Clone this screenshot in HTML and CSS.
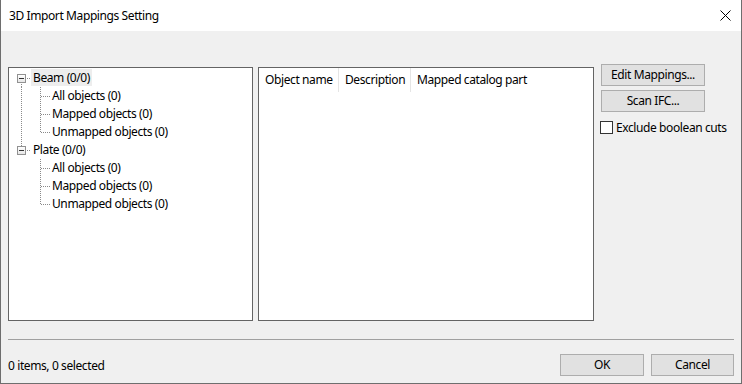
FILE: index.html
```html
<!DOCTYPE html>
<html>
	<head>
		<meta charset="UTF-8">
		<title>3D Import Mappings Setting</title>
		<link rel="stylesheet" href="styles.css">
	</head>
	<body>
		<div class="window">
			<div class="titlebar">
				<span class="caption">3D Import Mappings Setting</span>
				<svg class="close" width="11" height="11" viewBox="0 0 11 11">
					<path d="M0.5 0.5 L10.5 10.5 M10.5 0.5 L0.5 10.5" stroke="#000" stroke-width="1" fill="none"/>
				</svg>
			</div>
			<div class="content">
				<div class="main">
					<div class="tree">
						<div class="row">
							<span class="lead first"><span class="box"></span></span>
							<span class="label selected">Beam (0/0)</span>
						</div>
						<div class="row">
							<span class="lead pipe"></span>
							<span class="joint tee"></span>
							<span class="label">All objects (0)</span>
						</div>
						<div class="row">
							<span class="lead pipe"></span>
							<span class="joint tee"></span>
							<span class="label">Mapped objects (0)</span>
						</div>
						<div class="row">
							<span class="lead pipe"></span>
							<span class="joint elbow"></span>
							<span class="label">Unmapped objects (0)</span>
						</div>
						<div class="row">
							<span class="lead last"><span class="box"></span></span>
							<span class="label">Plate (0/0)</span>
						</div>
						<div class="row">
							<span class="lead"></span>
							<span class="joint tee"></span>
							<span class="label">All objects (0)</span>
						</div>
						<div class="row">
							<span class="lead"></span>
							<span class="joint tee"></span>
							<span class="label">Mapped objects (0)</span>
						</div>
						<div class="row">
							<span class="lead"></span>
							<span class="joint elbow"></span>
							<span class="label">Unmapped objects (0)</span>
						</div>
					</div>
					<div class="list">
						<div class="header">
							<div class="col c-name">Object name</div>
							<div class="col c-desc">Description</div>
							<div class="col c-part">Mapped catalog part</div>
						</div>
					</div>
					<div class="side">
						<div class="btn wide">Edit Mappings...</div>
						<div class="btn wide">Scan IFC...</div>
						<label class="check"><span class="checkbox"></span>Exclude boolean cuts</label>
					</div>
				</div>
				<div class="separator"></div>
				<div class="footer">
					<span class="status">0 items, 0 selected</span>
					<div class="btn ok">OK</div>
					<div class="btn cancel">Cancel</div>
				</div>
			</div>
		</div>
	</body>
</html>
```

FILE: styles.css
```css
html,body{
	margin: 0;
	padding: 0;
}
body{
	font-family: "Noto Sans", "Open Sans", sans-serif;
	font-size: 12px;
	letter-spacing: -0.4px;
	color: #000;
	background: #f0f0f0;
}
.window{
	--dv: repeating-linear-gradient(to bottom, #8a8a8a 0 1px, transparent 1px 2px);
	--dh: repeating-linear-gradient(to right, #8a8a8a 0 1px, transparent 1px 2px);
	box-sizing: border-box;
	width: 742px;
	height: 384px;
	border: 1px solid #6e6e6e;
	border-top: none;
	background: #f0f0f0;
	display: flex;
	flex-direction: column;
}
.titlebar{
	height: 31px;
	flex: none;
	background: #fff;
	display: flex;
	align-items: center;
	padding: 0 9px 0 8px;
}
.caption{
	flex: 1;
	margin-top: -1px;
}
.close{
	margin-right: 1px;
	margin-top: -1px;
}
.content{
	flex: 1;
	display: flex;
	flex-direction: column;
	padding: 33px 7px 7px 7px;
}
.main{
	display: flex;
	align-items: flex-start;
}
.tree,.list{
	box-sizing: border-box;
	height: 254px;
	margin-top: 3px;
	background: #fff;
	border: 1px solid #646464;
}
.tree{
	width: 245px;
	padding-top: 1px;
}
.list{
	width: 336px;
	margin-left: 5px;
}
.row{
	display: flex;
	height: 18px;
}
.lead{
	flex: none;
	width: 22px;
	height: 18px;
	background-repeat: no-repeat;
}
.lead.pipe{
	background-image: var(--dv);
	background-size: 1px 18px;
	background-position: 12px 0;
}
.lead.first{
	background-image: var(--dh), var(--dv);
	background-size: 10px 1px, 1px 9px;
	background-position: 12px 9px, 12px 9px;
}
.lead.last{
	background-image: var(--dh), var(--dv);
	background-size: 10px 1px, 1px 9px;
	background-position: 12px 9px, 12px 0;
}
.box{
	display: block;
	box-sizing: border-box;
	width: 9px;
	height: 9px;
	margin: 5px 0 0 8px;
	border: 1px solid #919191;
	background: linear-gradient(#333, #333) no-repeat center / 5px 1px, linear-gradient(#fff, #e6e6e6);
}
.joint{
	flex: none;
	width: 19px;
	height: 18px;
	background-repeat: no-repeat;
}
.joint.tee{
	background-image: var(--dh), var(--dv);
	background-size: 9px 1px, 1px 18px;
	background-position: 10px 9px, 9px 0;
}
.joint.elbow{
	background-image: var(--dh), var(--dv);
	background-size: 9px 1px, 1px 10px;
	background-position: 10px 9px, 9px 0;
}
.label{
	height: 17px;
	line-height: 17px;
	padding: 0 2px;
	white-space: nowrap;
}
.label.selected{
	background: #ededed;
}
.header{
	display: flex;
	height: 24px;
	line-height: 23px;
}
.col{
	padding-left: 6px;
	white-space: nowrap;
}
.c-name{
	width: 73px;
	border-right: 1px solid #e5e5e5;
}
.c-desc{
	width: 65px;
	border-right: 1px solid #e5e5e5;
}
.side{
	margin-left: 7px;
	display: flex;
	flex-direction: column;
}
.btn{
	box-sizing: border-box;
	height: 22px;
	line-height: 20px;
	text-align: center;
	background: #e1e1e1;
	border: 1px solid #adadad;
}
.btn.wide{
	width: 104px;
	margin-bottom: 4px;
}
.check{
	display: flex;
	align-items: center;
	margin-top: 3px;
	white-space: nowrap;
}
.checkbox{
	box-sizing: border-box;
	width: 13px;
	height: 13px;
	margin: 0 3px 0 -1px;
	background: #fff;
	border: 1px solid #333;
}
.separator{
	height: 1px;
	margin-top: 18px;
	background: #a0a0a0;
}
.footer{
	display: flex;
	align-items: center;
	margin-top: 14px;
}
.status{
	flex: 1;
}
.btn.ok{
	width: 84px;
}
.btn.cancel{
	width: 83px;
	margin-left: 7px;
}
```
